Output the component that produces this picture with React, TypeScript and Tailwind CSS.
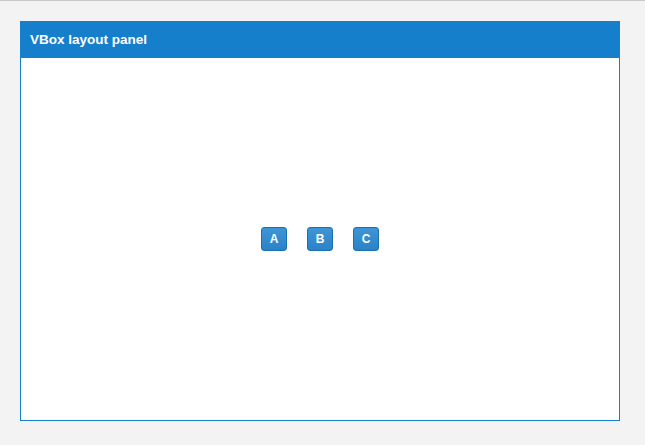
export default function App() {
  const buttons = ['A', 'B', 'C'];

  return (
    <div
      className="w-[645px] h-[445px] bg-[#f3f3f3] border-t border-[#c9c9c9] pt-5 pl-5"
      style={{ fontFamily: '"Liberation Sans", Arial, sans-serif' }}
    >
      <div className="w-[600px] h-[400px] flex flex-col border border-[#157fcc] bg-white">
        {/* Header */}
        <div className="h-[36px] bg-[#157fcc] flex items-center px-[9px] shrink-0">
          <span className="text-white text-[13.5px] font-bold">VBox layout panel</span>
        </div>

        {/* Body */}
        <div className="flex-1 flex items-center justify-center gap-[20px]">
          {buttons.map((label) => (
            <button
              key={label}
              className="w-[26px] h-[24px] rounded-[3px] border border-[#1a6fae] bg-gradient-to-b from-[#3d95d6] to-[#2b82c8] text-white text-[12px] font-bold flex items-center justify-center"
            >
              {label}
            </button>
          ))}
        </div>
      </div>
    </div>
  );
}
